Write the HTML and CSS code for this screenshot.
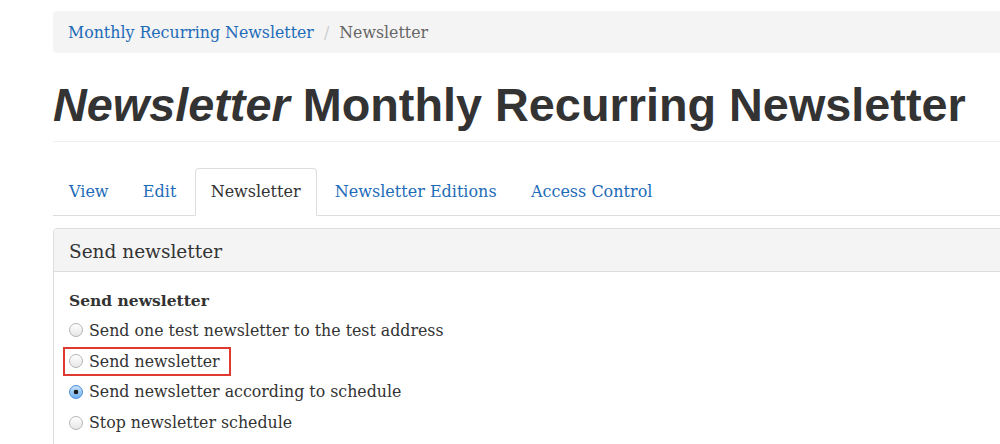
FILE: index.html
```html
<!DOCTYPE html>
<html lang="en">
<head>
<meta charset="utf-8">
<title>Newsletter</title>
<link rel="stylesheet" href="styles.css">
</head>
<body>
<div class="page">
  <ol class="breadcrumb">
    <li><a href="#">Monthly Recurring Newsletter</a></li>
    <li class="sep">/</li>
    <li class="active">Newsletter</li>
  </ol>

  <div class="page-header">
    <h1><em>Newsletter</em> Monthly Recurring Newsletter</h1>
  </div>

  <ul class="tabs">
    <li><a href="#">View</a></li>
    <li><a href="#">Edit</a></li>
    <li class="active"><a href="#">Newsletter</a></li>
    <li><a href="#">Newsletter Editions</a></li>
    <li><a href="#">Access Control</a></li>
  </ul>

  <section class="panel">
    <div class="panel-heading">Send newsletter</div>
    <div class="panel-body">
      <div class="field-label">Send newsletter</div>
      <div class="radios">
        <label class="radio"><input type="radio" name="send"> Send one test newsletter to the test address</label>
        <label class="radio highlighted"><input type="radio" name="send"> Send newsletter</label>
        <label class="radio"><input type="radio" name="send" checked> Send newsletter according to schedule</label>
        <label class="radio"><input type="radio" name="send"> Stop newsletter schedule</label>
      </div>
    </div>
  </section>
</div>
</body>
</html>
```

FILE: styles.css
```css
html, body {
  margin: 0;
  padding: 0;
  background: #fff;
  overflow: hidden;
}

body {
  font-family: "DejaVu Serif", "Liberation Serif", serif;
  font-size: 15.8px;
  color: #333;
}

a {
  color: #1e6bb8;
  text-decoration: none;
}

.page {
  width: 1100px;
  padding-left: 53px;
}

/* Breadcrumb */
.breadcrumb {
  list-style: none;
  margin: 11px 0 0;
  padding: 0 15px;
  height: 42px;
  display: flex;
  align-items: center;
  background: #f4f4f4;
  border-radius: 4px;
}

.breadcrumb .sep {
  color: #ccc;
  padding: 0 10px;
}

.breadcrumb .active {
  color: #666;
}

/* Header */
.page-header {
  margin-top: 26px;
  padding-bottom: 10px;
  border-bottom: 1px solid #eee;
}

.page-header h1 {
  margin: 0;
  font-family: "Liberation Sans", Arial, sans-serif;
  font-weight: bold;
  font-size: 46.8px;
  line-height: 52px;
  color: #333;
}

/* Tabs */
.tabs {
  list-style: none;
  margin: 26px 0 0;
  padding: 0;
  display: flex;
  font-size: 16px;
  border-bottom: 1px solid #ddd;
}

.tabs li {
  margin-bottom: -1px;
}

.tabs a {
  display: block;
  padding: 10px 15px;
  line-height: 26px;
  margin-right: 2.3px;
  border: 1px solid transparent;
  border-radius: 4px 4px 0 0;
}

.tabs .active a {
  color: #333;
  background: #fff;
  border-color: #ddd #ddd transparent;
}

/* Panel */
.panel {
  margin-top: 12px;
  border: 1px solid #ddd;
  border-radius: 4px;
}

.panel-heading {
  background: #f4f4f4;
  border-bottom: 1px solid #ddd;
  padding: 10px 15px 7px;
  line-height: 25px;
  font-size: 18.5px;
  border-radius: 3px 3px 0 0;
}

.panel-body {
  padding: 16px 15px 15px;
}

.field-label {
  font-weight: bold;
  font-size: 15.5px;
  line-height: 26px;
  margin-bottom: 1px;
}

.radios {
  display: flex;
  flex-direction: column;
  align-items: flex-start;
}

.radio {
  display: inline-flex;
  align-items: center;
  height: 30.8px;
  position: relative;
}

.radio input {
  appearance: none;
  -webkit-appearance: none;
  width: 14px;
  height: 14px;
  margin: 0 6px 0 0;
  border-radius: 50%;
  border: 1px solid #b4b4b4;
  background: linear-gradient(#ffffff, #e6e6e6);
  box-sizing: border-box;
}

.radio input:checked {
  border-color: #4f8fd6;
  background:
    radial-gradient(circle, #1a1a1a 0 2px, transparent 2.6px),
    linear-gradient(#c6e1fa, #6fb0ee);
}

.highlighted::after {
  content: "";
  position: absolute;
  left: -6px;
  right: -11px;
  top: 1px;
  bottom: 1px;
  border: 2px solid #de3a2f;
}
```
